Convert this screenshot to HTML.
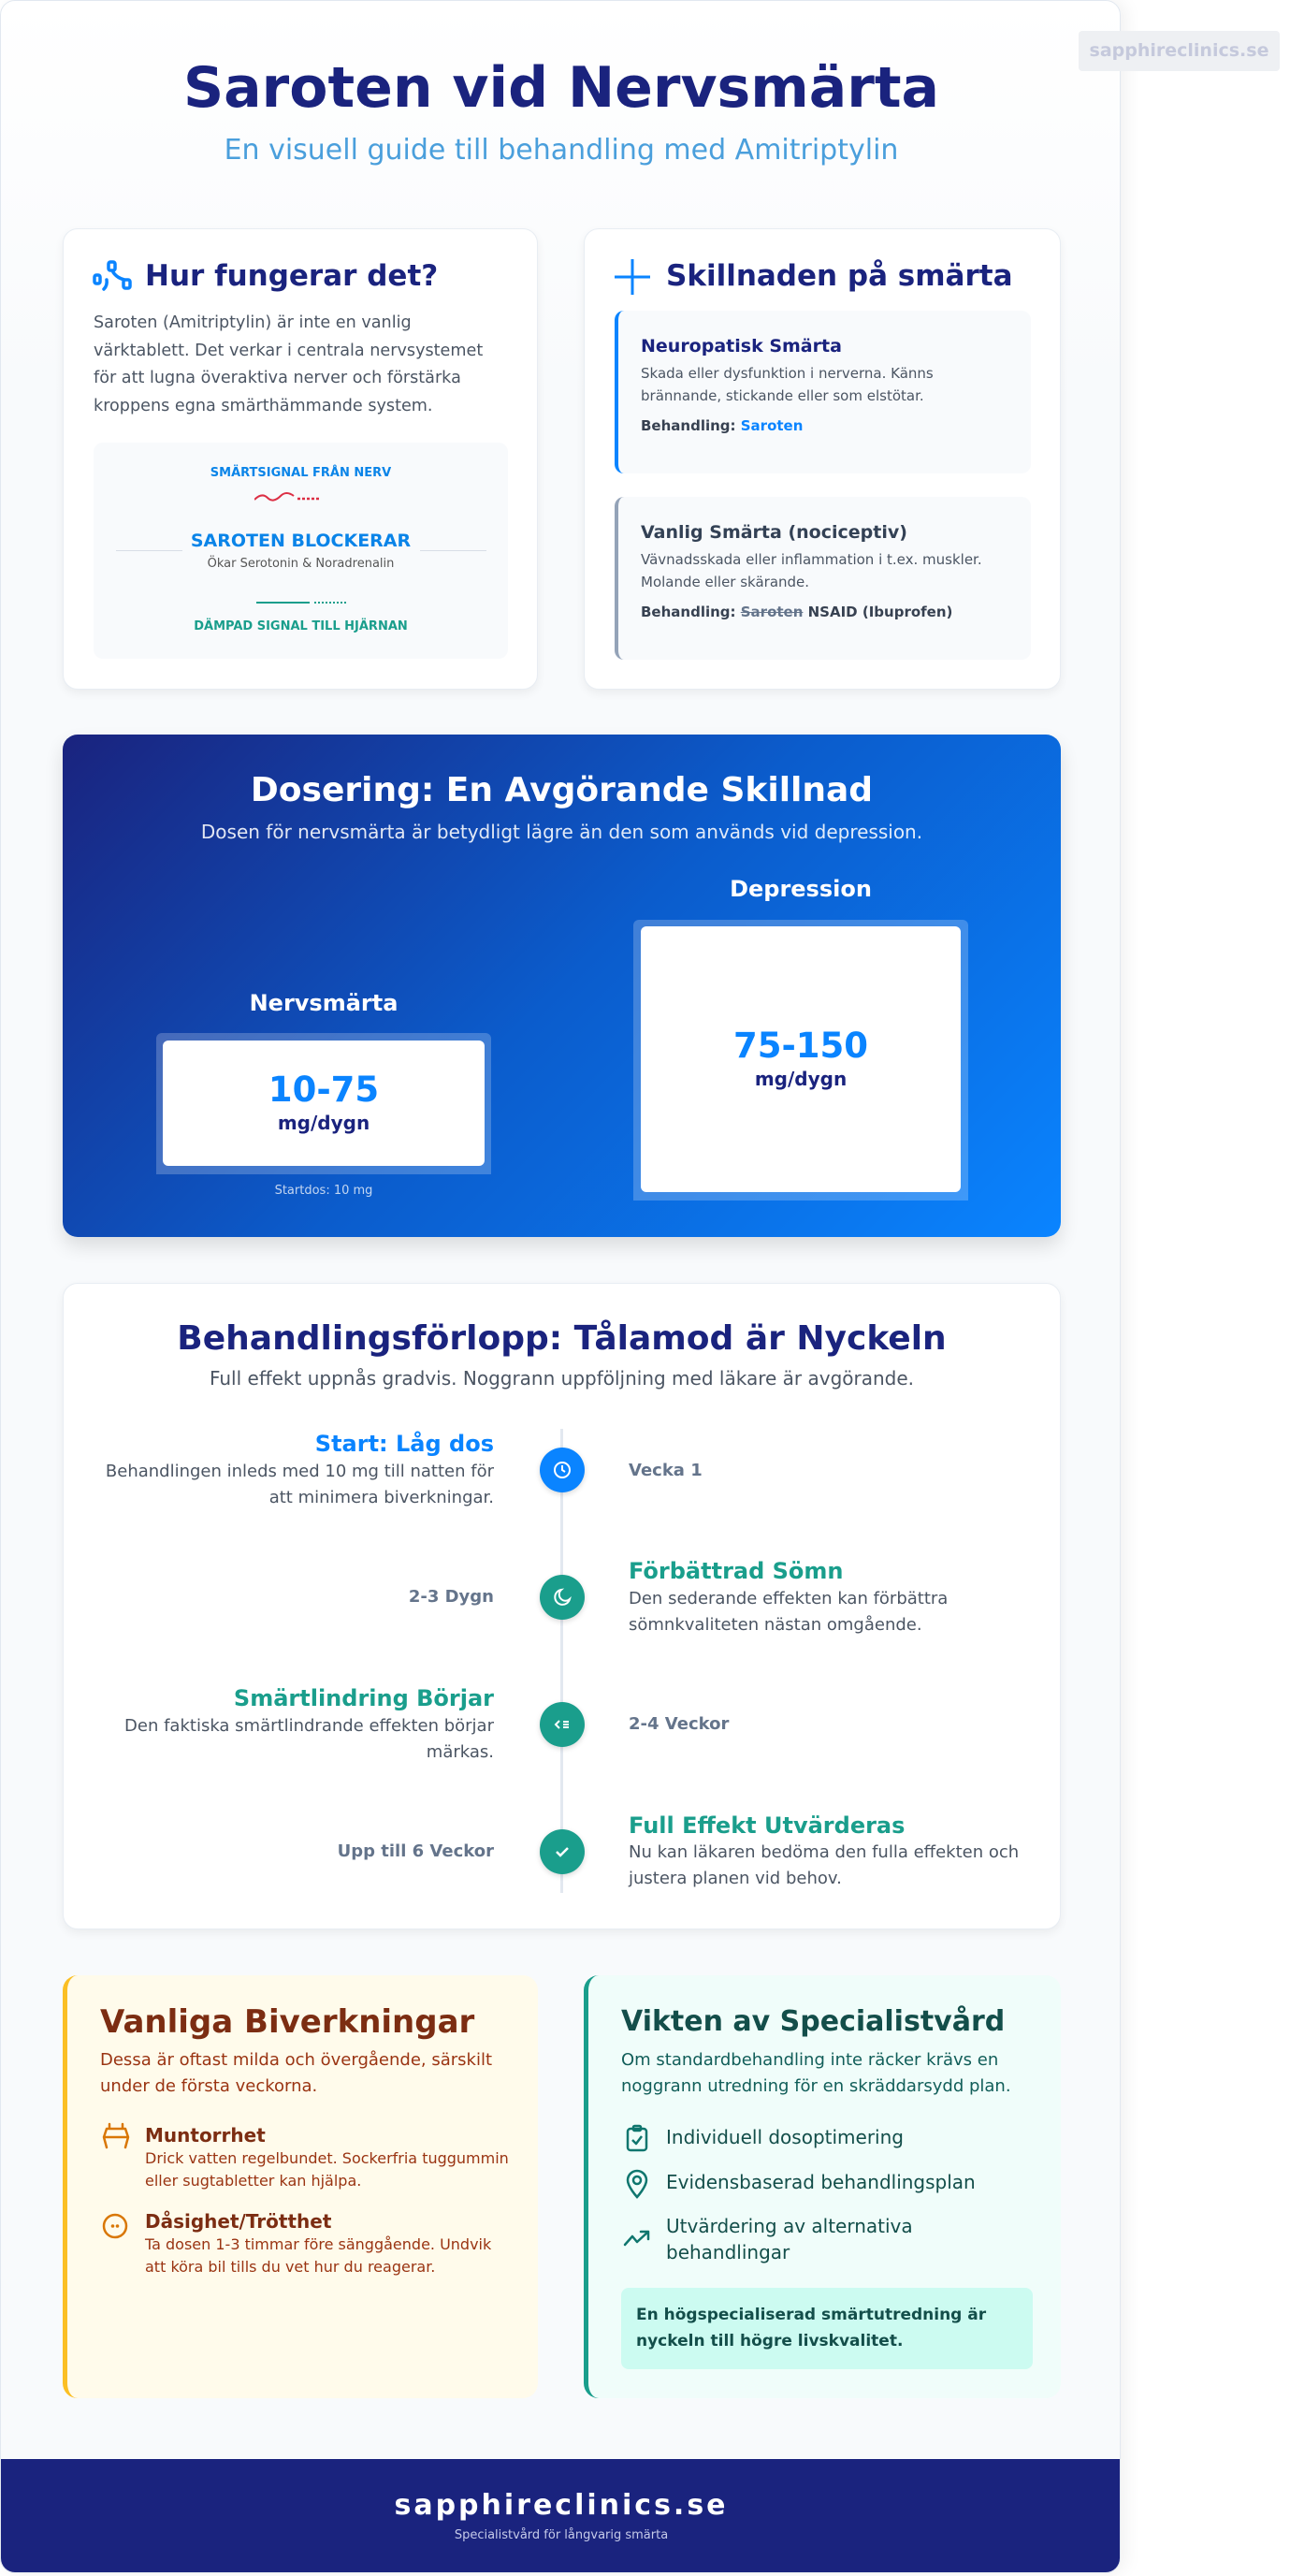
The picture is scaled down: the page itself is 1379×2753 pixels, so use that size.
<!DOCTYPE html>
<html><head><meta charset="utf-8">
<style>
*{margin:0;padding:0;box-sizing:border-box}
html,body{width:1379px;height:2753px;background:#fff;overflow:hidden}
body{font-family:"DejaVu Sans","Liberation Sans",sans-serif;position:relative}
.a{position:absolute}
.c{text-align:center}
.wrap{left:0;top:0;width:1198px;height:2750px;border:1px solid #e2e8f0;border-radius:16px;background:linear-gradient(#ffffff 0,#f8fafc 420px,#f8fafc 100%);box-shadow:6px 0 18px rgba(0,0,0,.06);overflow:hidden}
.card{background:#fff;border:1px solid #e8edf3;border-radius:16px;box-shadow:0 4px 10px rgba(0,0,0,.06)}
.nv{color:#1a237e}
.bl{color:#0a84ff}
.tl{color:#1a9e8c}
.gr{color:#4b5563}
</style></head><body>
<div class="a wrap">
  <div class="a c nv" style="left:0;width:1198px;top:57px;font-size:60px;font-weight:bold;line-height:72px">Saroten vid Nervsmärta</div>
  <div class="a c" style="left:0;width:1198px;top:141px;font-size:30px;line-height:38px;color:#4a9fdc">En visuell guide till behandling med Amitriptylin</div>

  <!-- card 1 -->
  <div class="a card" style="left:66px;top:243px;width:508px;height:493px"></div>
  <svg class="a" style="left:98px;top:276px" width="42" height="36" viewBox="0 0 42 36" fill="none" stroke="#0a84ff" stroke-width="3.5" stroke-linecap="round">
    <rect x="2" y="17" width="6" height="9" rx="2"/><rect x="17" y="3" width="7" height="9" rx="2"/><rect x="33" y="22" width="7" height="9" rx="2"/>
    <path d="M12 32 Q16 28 15 22"/><path d="M22 14 Q26 20 34 22"/>
  </svg>
  <div class="a nv" style="left:154px;top:274px;font-size:31px;font-weight:bold;line-height:40px">Hur fungerar det?</div>
  <div class="a gr" style="left:99px;top:330px;width:420px;font-size:17.6px;line-height:29.6px">Saroten (Amitriptylin) är inte en vanlig värktablett. Det verkar i centrala nervsystemet för att lugna överaktiva nerver och förstärka kroppens egna smärthämmande system.</div>
  <div class="a" style="left:99px;top:472px;width:443px;height:231px;background:#f8fafc;border-radius:10px"></div>
  <div class="a c" style="left:99px;width:443px;top:496px;font-size:13px;font-weight:bold;line-height:18px;color:#0a84e8">SMÄRTSIGNAL FRÅN NERV</div>
  <svg class="a" style="left:271px;top:521px" width="100" height="20" viewBox="0 0 100 20" fill="none">
    <path d="M0 12 Q8 4 14 10 T28 8 Q34 2 42 8" stroke="#dc2f45" stroke-width="2"/>
    <path d="M46 11 H70" stroke="#dc2f45" stroke-width="2.5" stroke-dasharray="3 2"/>
  </svg>
  <div class="a" style="left:123px;top:587px;width:71px;height:1px;background:#d8dee6"></div>
  <div class="a" style="left:448px;top:587px;width:71px;height:1px;background:#d8dee6"></div>
  <div class="a c" style="left:99px;width:443px;top:565px;font-size:19px;font-weight:bold;line-height:24px;color:#0a84e8">SAROTEN BLOCKERAR</div>
  <div class="a c" style="left:99px;width:443px;top:593px;font-size:13px;line-height:17px;color:#555">Ökar Serotonin &amp; Noradrenalin</div>
  <div class="a" style="left:273px;top:642px;width:57px;height:2px;background:#1a9e8c"></div>
  <div class="a" style="left:335px;top:642px;width:34px;border-top:2px dotted #1a9e8c"></div>
  <div class="a c tl" style="left:99px;width:443px;top:660px;font-size:13px;font-weight:bold;line-height:18px">DÄMPAD SIGNAL TILL HJÄRNAN</div>

  <!-- card 2 -->
  <div class="a card" style="left:623px;top:243px;width:510px;height:493px"></div>
  <svg class="a" style="left:656px;top:276px" width="38" height="38" viewBox="0 0 38 38" stroke="#0a84ff" stroke-width="3"><path d="M19 0V38M0 19H38"/></svg>
  <div class="a nv" style="left:711px;top:274px;font-size:31px;font-weight:bold;line-height:40px">Skillnaden på smärta</div>
  <div class="a" style="left:656px;top:331px;width:445px;height:174px;background:#f8fafc;border-radius:10px;border-left:4px solid #0a84ff"></div>
  <div class="a nv" style="left:684px;top:357px;font-size:19px;font-weight:bold;line-height:24px">Neuropatisk Smärta</div>
  <div class="a gr" style="left:684px;top:386px;width:395px;font-size:15px;line-height:24px">Skada eller dysfunktion i nerverna. Känns brännande, stickande eller som elstötar.</div>
  <div class="a" style="left:684px;top:444px;font-size:15px;line-height:20px;font-weight:bold;color:#374151">Behandling: <span class="bl">Saroten</span></div>
  <div class="a" style="left:656px;top:530px;width:445px;height:174px;background:#f8fafc;border-radius:10px;border-left:4px solid #94a3b8"></div>
  <div class="a" style="left:684px;top:556px;font-size:19px;font-weight:bold;line-height:24px;color:#334155">Vanlig Smärta (nociceptiv)</div>
  <div class="a gr" style="left:684px;top:585px;width:400px;font-size:15px;line-height:24px">Vävnadsskada eller inflammation i t.ex. muskler. Molande eller skärande.</div>
  <div class="a" style="left:684px;top:643px;font-size:15px;line-height:20px;font-weight:bold;color:#374151">Behandling: <s style="color:#64748b">Saroten</s> NSAID (Ibuprofen)</div>

  <!-- dosing -->
  <div class="a" style="left:66px;top:784px;width:1067px;height:537px;border-radius:16px;background:linear-gradient(135deg,#1a237e 0%,#0b5ccc 50%,#0a84ff 100%);box-shadow:0 10px 20px rgba(0,0,0,.12)"></div>
  <div class="a c" style="left:66px;width:1067px;top:821px;font-size:36px;font-weight:bold;line-height:46px;color:#fff">Dosering: En Avgörande Skillnad</div>
  <div class="a c" style="left:66px;width:1067px;top:875px;font-size:20px;line-height:26px;color:rgba(255,255,255,.88)">Dosen för nervsmärta är betydligt lägre än den som används vid depression.</div>
  <div class="a c" style="left:676px;width:358px;top:934px;font-size:24px;font-weight:bold;line-height:30px;color:#fff">Depression</div>
  <div class="a" style="left:676px;top:982px;width:358px;height:300px;background:rgba(255,255,255,.22);border-radius:6px 6px 0 0"></div>
  <div class="a" style="left:684px;top:989px;width:342px;height:284px;background:#fff;border-radius:6px"></div>
  <div class="a c bl" style="left:684px;width:342px;top:1094px;font-size:37px;font-weight:bold;line-height:46px">75-150</div>
  <div class="a c nv" style="left:684px;width:342px;top:1140px;font-size:20px;font-weight:bold;line-height:24px">mg/dygn</div>
  <div class="a c" style="left:166px;width:358px;top:1056px;font-size:24px;font-weight:bold;line-height:30px;color:#fff">Nervsmärta</div>
  <div class="a" style="left:166px;top:1103px;width:358px;height:151px;background:rgba(255,255,255,.22);border-radius:6px 6px 0 0"></div>
  <div class="a" style="left:173px;top:1111px;width:344px;height:134px;background:#fff;border-radius:6px"></div>
  <div class="a c bl" style="left:173px;width:344px;top:1141px;font-size:37px;font-weight:bold;line-height:46px">10-75</div>
  <div class="a c nv" style="left:173px;width:344px;top:1187px;font-size:20px;font-weight:bold;line-height:24px">mg/dygn</div>
  <div class="a c" style="left:166px;width:358px;top:1263px;font-size:13px;line-height:18px;color:rgba(255,255,255,.75)">Startdos: 10 mg</div>

  <!-- timeline -->
  <div class="a card" style="left:66px;top:1370px;width:1067px;height:691px"></div>
  <div class="a c nv" style="left:66px;width:1067px;top:1408px;font-size:36px;font-weight:bold;line-height:44px">Behandlingsförlopp: Tålamod är Nyckeln</div>
  <div class="a c gr" style="left:66px;width:1067px;top:1459px;font-size:20px;line-height:26px">Full effekt uppnås gradvis. Noggrann uppföljning med läkare är avgörande.</div>
  <div class="a" style="left:598px;top:1526px;width:3px;height:496px;background:#e2e8f0"></div>

  <div class="a" style="left:576px;top:1546px;width:48px;height:48px;border-radius:50%;background:#0a84ff;box-shadow:0 2px 6px rgba(0,0,0,.15)"></div>
  <svg class="a" style="left:590px;top:1560px" width="20" height="20" viewBox="0 0 20 20" fill="none" stroke="#fff" stroke-width="2"><circle cx="10" cy="10" r="8"/><path d="M10 5V10L13 12"/></svg>
  <div class="a" style="left:576px;top:1682px;width:48px;height:48px;border-radius:50%;background:#1a9e8c;box-shadow:0 2px 6px rgba(0,0,0,.15)"></div>
  <svg class="a" style="left:590px;top:1696px" width="20" height="20" viewBox="0 0 20 20" fill="none" stroke="#fff" stroke-width="2"><path d="M9 2A8 8 0 1 0 18 12A6 6 0 0 1 9 2Z"/></svg>
  <div class="a" style="left:576px;top:1818px;width:48px;height:48px;border-radius:50%;background:#1a9e8c;box-shadow:0 2px 6px rgba(0,0,0,.15)"></div>
  <svg class="a" style="left:590px;top:1832px" width="20" height="20" viewBox="0 0 20 20" fill="none" stroke="#fff" stroke-width="2"><path d="M7 6L3 10L7 14M11 7H17M11 10H17M11 13H17"/></svg>
  <div class="a" style="left:576px;top:1954px;width:48px;height:48px;border-radius:50%;background:#1a9e8c;box-shadow:0 2px 6px rgba(0,0,0,.15)"></div>
  <svg class="a" style="left:590px;top:1968px" width="20" height="20" viewBox="0 0 20 20" fill="none" stroke="#fff" stroke-width="2.5"><path d="M4 10L8 14L16 6"/></svg>

  <div class="a bl" style="left:97px;width:430px;text-align:right;top:1527px;font-size:24px;font-weight:bold;line-height:30px">Start: Låg dos</div>
  <div class="a gr" style="left:97px;width:430px;text-align:right;top:1558px;font-size:18px;line-height:28px">Behandlingen inleds med 10 mg till natten för att minimera biverkningar.</div>
  <div class="a" style="left:671px;top:1560px;font-size:18px;font-weight:bold;line-height:22px;color:#64748b">Vecka 1</div>

  <div class="a" style="left:97px;width:430px;text-align:right;top:1695px;font-size:18px;font-weight:bold;line-height:22px;color:#64748b">2-3 Dygn</div>
  <div class="a tl" style="left:671px;top:1663px;font-size:24px;font-weight:bold;line-height:30px">Förbättrad Sömn</div>
  <div class="a gr" style="left:671px;width:445px;top:1694px;font-size:18px;line-height:28px">Den sederande effekten kan förbättra sömnkvaliteten nästan omgående.</div>

  <div class="a tl" style="left:97px;width:430px;text-align:right;top:1799px;font-size:24px;font-weight:bold;line-height:30px">Smärtlindring Börjar</div>
  <div class="a gr" style="left:97px;width:430px;text-align:right;top:1830px;font-size:18px;line-height:28px">Den faktiska smärtlindrande effekten börjar märkas.</div>
  <div class="a" style="left:671px;top:1831px;font-size:18px;font-weight:bold;line-height:22px;color:#64748b">2-4 Veckor</div>

  <div class="a" style="left:97px;width:430px;text-align:right;top:1967px;font-size:18px;font-weight:bold;line-height:22px;color:#64748b">Upp till 6 Veckor</div>
  <div class="a tl" style="left:671px;top:1935px;font-size:24px;font-weight:bold;line-height:30px">Full Effekt Utvärderas</div>
  <div class="a gr" style="left:671px;width:445px;top:1965px;font-size:18px;line-height:28px">Nu kan läkaren bedöma den fulla effekten och justera planen vid behov.</div>

  <!-- side effects -->
  <div class="a" style="left:66px;top:2110px;width:508px;height:452px;background:#fffbeb;border-left:5px solid #fbbf24;border-radius:16px"></div>
  <div class="a" style="left:106px;top:2140px;font-size:34px;font-weight:bold;line-height:40px;color:#7c2d12">Vanliga Biverkningar</div>
  <div class="a" style="left:106px;top:2187px;width:450px;font-size:18px;line-height:28px;color:#9a3412">Dessa är oftast milda och övergående, särskilt under de första veckorna.</div>
  <svg class="a" style="left:107px;top:2266px" width="32" height="32" viewBox="0 0 32 32" fill="none" stroke="#d97706" stroke-width="2.5" stroke-linecap="round"><path d="M9 3V8M23 3V8M6 8H26M6 8L3 17L6 28M26 8L29 17L26 28M3 17H29"/></svg>
  <div class="a" style="left:154px;top:2269px;font-size:20px;font-weight:bold;line-height:24px;color:#7c2d12">Muntorrhet</div>
  <div class="a" style="left:154px;top:2294px;width:420px;font-size:16px;line-height:24px;color:#9a3412">Drick vatten regelbundet. Sockerfria tuggummin<br>eller sugtabletter kan hjälpa.</div>
  <svg class="a" style="left:107px;top:2363px" width="30" height="30" viewBox="0 0 30 30" fill="none" stroke="#d97706" stroke-width="2.5"><circle cx="15" cy="15" r="12"/><circle cx="12.5" cy="15" r="1.8" fill="#d97706" stroke="none"/><circle cx="17.5" cy="15" r="1.8" fill="#d97706" stroke="none"/></svg>
  <div class="a" style="left:154px;top:2361px;font-size:20px;font-weight:bold;line-height:24px;color:#7c2d12">Dåsighet/Trötthet</div>
  <div class="a" style="left:154px;top:2386px;width:420px;font-size:16px;line-height:24px;color:#9a3412">Ta dosen 1-3 timmar före sänggående. Undvik<br>att köra bil tills du vet hur du reagerar.</div>

  <!-- specialist -->
  <div class="a" style="left:623px;top:2110px;width:510px;height:452px;background:#f0fdfa;border-left:5px solid #1a9e8c;border-radius:16px"></div>
  <div class="a" style="left:663px;top:2141px;font-size:30px;font-weight:bold;line-height:38px;color:#134e4a">Vikten av Specialistvård</div>
  <div class="a" style="left:663px;top:2187px;width:460px;font-size:18px;line-height:28px;color:#115e59">Om standardbehandling inte räcker krävs en noggrann utredning för en skräddarsydd plan.</div>
  <svg class="a" style="left:667px;top:2269px" width="26" height="30" viewBox="0 0 26 30" fill="none" stroke="#0f766e" stroke-width="2.5" stroke-linejoin="round"><rect x="3" y="5" width="20" height="23" rx="3"/><rect x="9" y="2" width="8" height="5" rx="1.5"/><path d="M8 17L12 21L18 13"/></svg>
  <div class="a" style="left:711px;top:2271px;font-size:20px;line-height:24px;color:#134e4a">Individuell dosoptimering</div>
  <svg class="a" style="left:667px;top:2317px" width="26" height="32" viewBox="0 0 26 32" fill="none" stroke="#0f766e" stroke-width="2.5"><path d="M13 30C13 30 3 19 3 12A10 10 0 0 1 23 12C23 19 13 30 13 30Z"/><circle cx="13" cy="12" r="4"/></svg>
  <div class="a" style="left:711px;top:2319px;font-size:20px;line-height:24px;color:#134e4a">Evidensbaserad behandlingsplan</div>
  <svg class="a" style="left:665px;top:2380px" width="30" height="22" viewBox="0 0 30 22" fill="none" stroke="#0f766e" stroke-width="2.5" stroke-linecap="round" stroke-linejoin="round"><path d="M2 18L10 9L15 15L27 4M19 4H27V12"/></svg>
  <div class="a" style="left:711px;top:2364px;width:380px;font-size:20px;line-height:28px;color:#134e4a">Utvärdering av alternativa behandlingar</div>
  <div class="a" style="left:663px;top:2444px;width:440px;height:87px;background:#ccfbf1;border-radius:8px"></div>
  <div class="a" style="left:679px;top:2459px;width:410px;font-size:17px;font-weight:bold;line-height:28px;color:#134e4a">En högspecialiserad smärtutredning är nyckeln till högre livskvalitet.</div>

  <!-- footer -->
  <div class="a" style="left:0;top:2627px;width:1198px;height:123px;background:#1a237e"></div>
  <div class="a c" style="left:0;width:1198px;top:2658px;font-size:30px;font-weight:bold;letter-spacing:3px;line-height:38px;color:#fff">sapphireclinics.se</div>
  <div class="a c" style="left:0;width:1198px;top:2700px;font-size:13px;line-height:18px;color:#c5cae9">Specialistvård för långvarig smärta</div>
</div>
<div class="a c" style="left:1153px;top:33px;width:215px;height:43px;background:#eef0f3;border-radius:4px;font-size:19px;font-weight:bold;line-height:43px;color:#c5c9dc">sapphireclinics.se</div>
</body></html>
